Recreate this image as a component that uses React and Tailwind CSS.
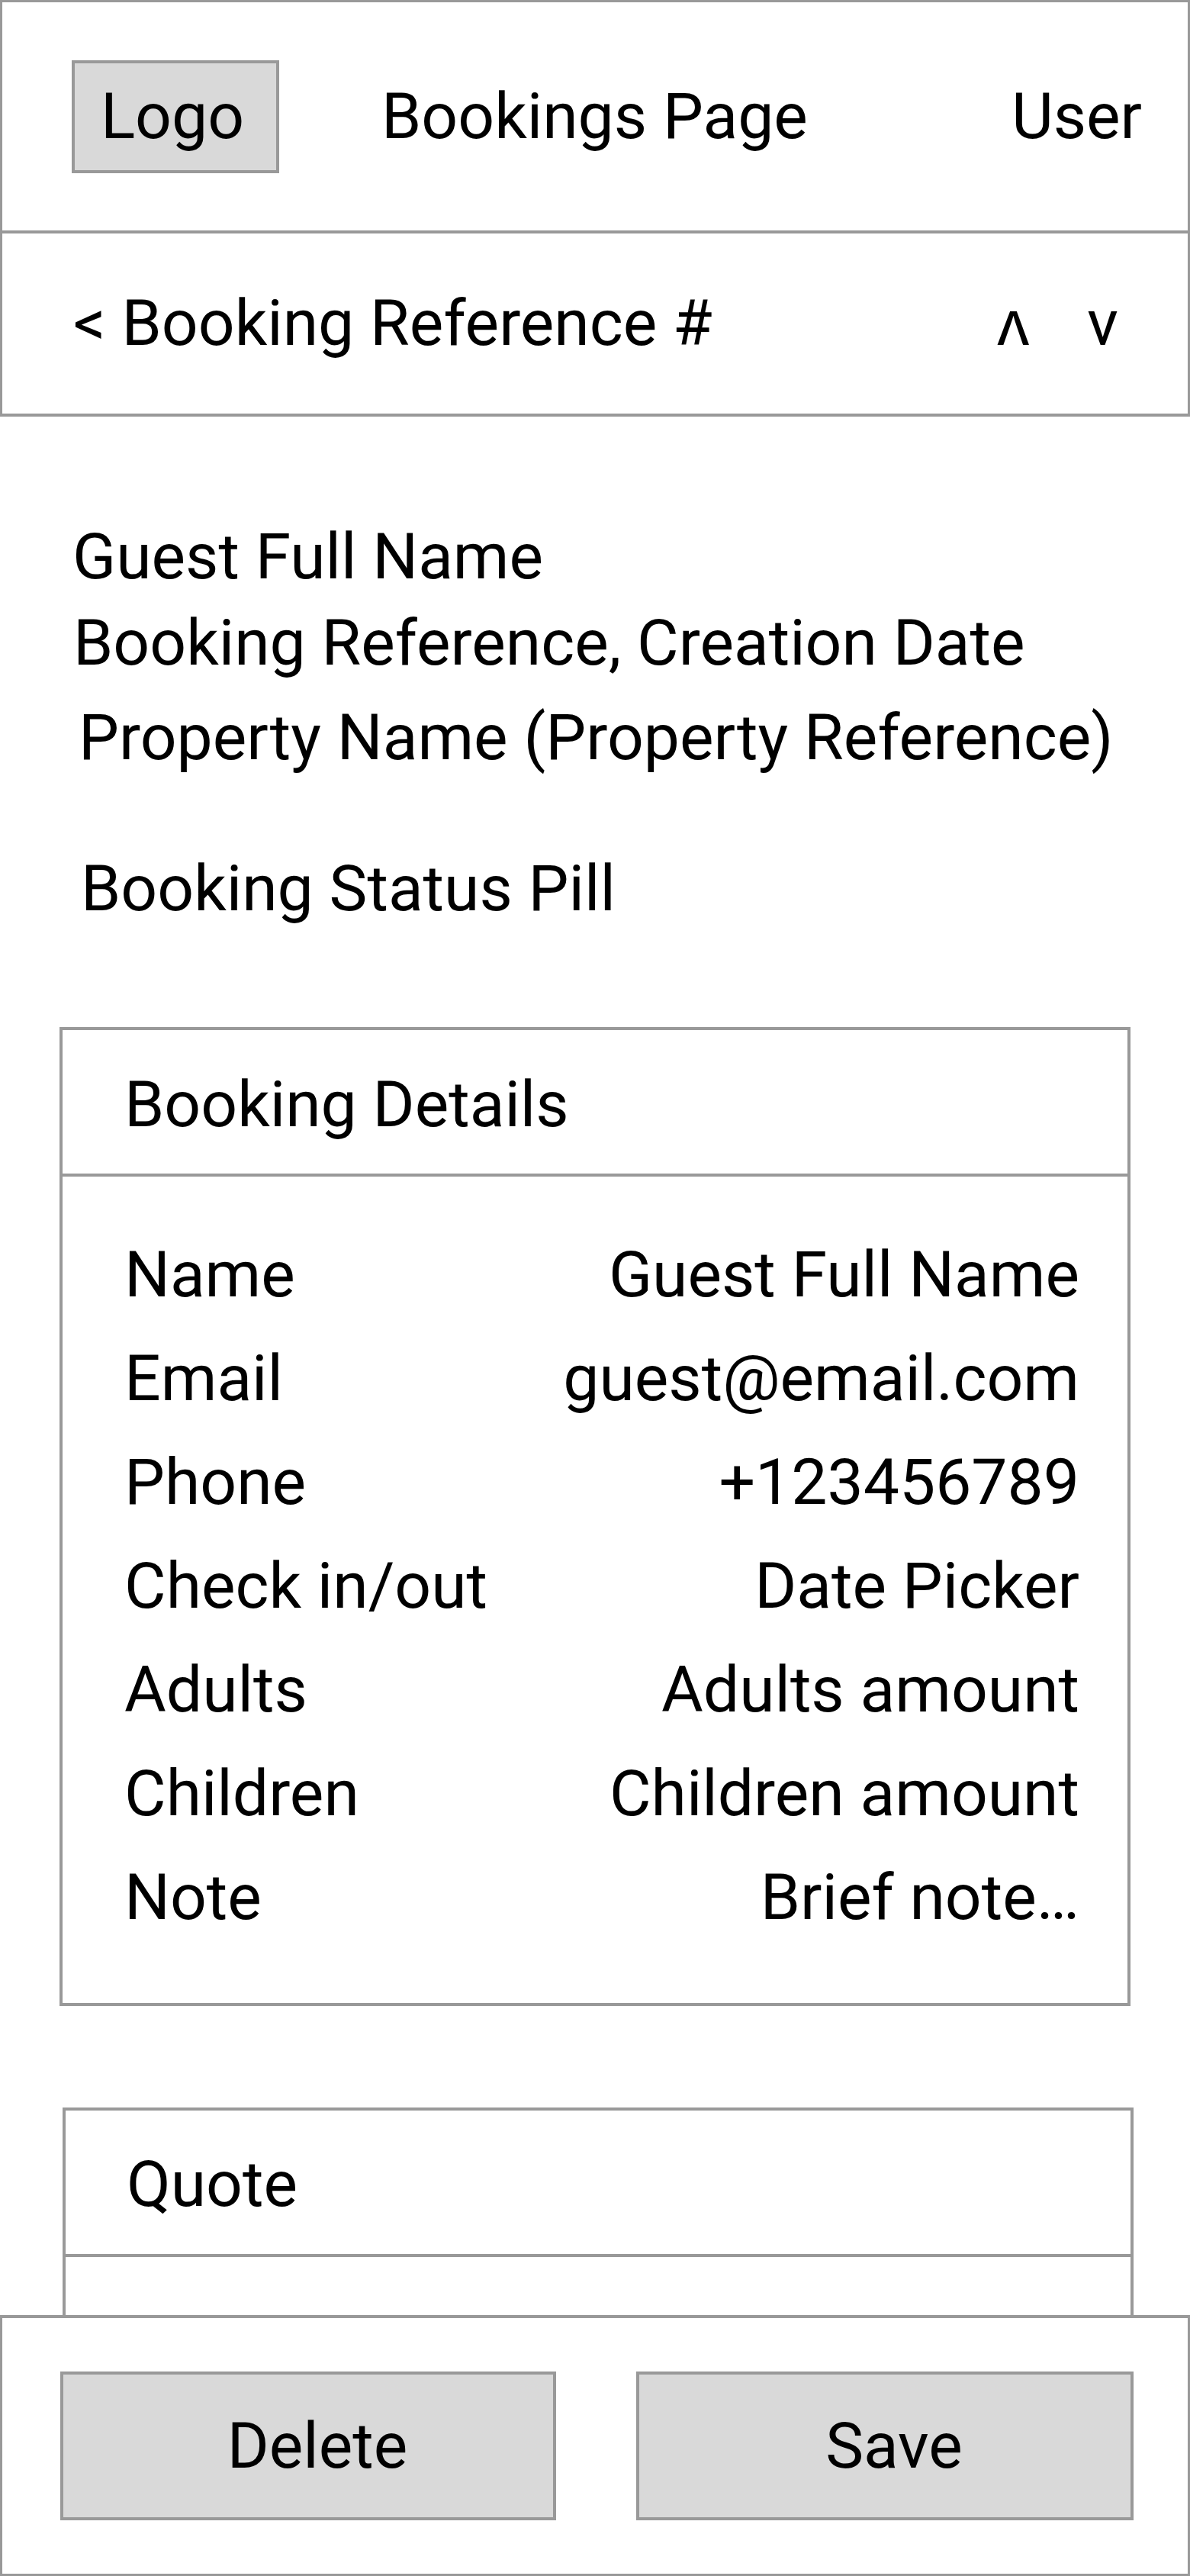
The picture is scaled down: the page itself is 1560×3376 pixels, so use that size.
import React from 'react';

const rows = [
  ['Name', 'Guest Full Name'],
  ['Email', 'guest@email.com'],
  ['Phone', '+123456789'],
  ['Check in/out', 'Date Picker'],
  ['Adults', 'Adults amount'],
  ['Children', 'Children amount'],
  ['Note', 'Brief note…'],
];

const App = () => {
  return (
    <div className="relative w-[1560px] h-[3376px] overflow-hidden bg-white text-black font-['Roboto',sans-serif] text-[84px] leading-[98px]">
      {/* Top bar */}
      <header className="flex items-center h-[306px] border-t-[3px] border-x-[3px] border-b-4 border-[#999999] pl-[91px] pr-[60px]">
        <div className="flex items-center justify-center w-[272px] h-[148px] border-4 border-[#999999] bg-[#d9d9d9] pr-[8px]">
          Logo
        </div>
        <div className="ml-[134px]">Bookings Page</div>
        <div className="ml-auto">User</div>
      </header>

      {/* Booking nav */}
      <div className="flex items-center h-[240px] border-x-[3px] border-b-4 border-[#999999] pl-[93px] pr-[91px]">
        <div>&lt; Booking Reference #</div>
        <div className="ml-auto flex gap-[76px]">
          <span>ʌ</span>
          <span>v</span>
        </div>
      </div>

      {/* Summary */}
      <div className="mt-[135px] flex flex-col">
        <div className="ml-[95px]">Guest Full Name</div>
        <div className="ml-[96px] mt-[15px]">Booking Reference, Creation Date</div>
        <div className="ml-[103px] mt-[26px]">Property Name (Property Reference)</div>
        <div className="ml-[106px] mt-[100px]">Booking Status Pill</div>
      </div>

      {/* Booking details card */}
      <section className="mt-[132px] ml-[78px] w-[1404px] border-4 border-[#999999]">
        <div className="pt-[49px] pb-[41px] pl-[81px] border-b-4 border-[#999999]">Booking Details</div>
        <div className="flex flex-col gap-[38px] pt-[80px] pb-[89px] pl-[81px] pr-[63px]">
          {rows.map(([label, value]) => (
            <div key={label} className="flex justify-between">
              <span>{label}</span>
              <span>{value}</span>
            </div>
          ))}
        </div>
      </section>

      {/* Quote card */}
      <section className="mt-[133px] ml-[82px] w-[1404px] border-4 border-[#999999]">
        <div className="pt-[48px] pb-[42px] pl-[80px] border-b-4 border-[#999999]">Quote</div>
        <div className="h-[300px]"></div>
      </section>

      {/* Action bar */}
      <footer className="absolute bottom-0 left-0 w-full h-[342px] bg-white border-t-4 border-x-[3px] border-b-[3px] border-[#999999] flex items-center justify-between pl-[76px] pr-[71px]">
        <button className="w-[650px] h-[195px] border-4 border-[#999999] bg-[#d9d9d9] flex items-center justify-center pl-[24px]">
          Delete
        </button>
        <button className="w-[652px] h-[195px] border-4 border-[#999999] bg-[#d9d9d9] flex items-center justify-center pl-[24px]">
          Save
        </button>
      </footer>
    </div>
  );
};

export default App;
